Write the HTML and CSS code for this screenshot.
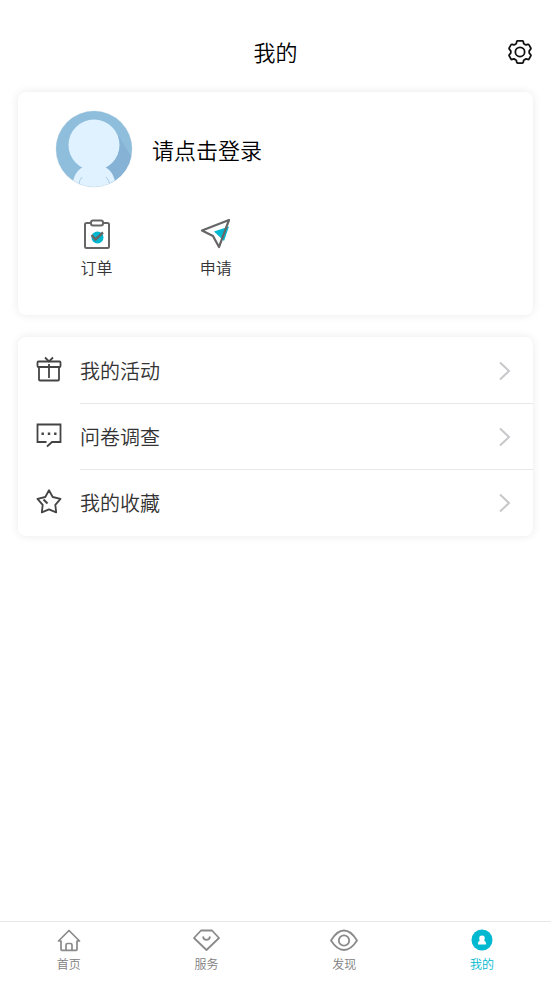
FILE: index.html
```html
<!DOCTYPE html>
<html lang="zh-CN">
<head>
<meta charset="utf-8">
<meta name="viewport" content="width=device-width, initial-scale=1">
<title>我的</title>
<link rel="stylesheet" href="styles.css">
</head>
<body>
<header class="header">
  <h1 class="title">我的</h1>
  <button class="settings" type="button" aria-label="设置">
    <svg width="26" height="28" viewBox="-0.5 -3 28 30" fill="none" stroke="#111" stroke-width="1.9" stroke-linejoin="round"><path d="M11 1h5q.8 0 1 .8l.5 2.300 2.500 1.400 2-.6q.8-.2 1.200.5l1.900 3.300q.4.700-.2 1.300L23.400 12v2l1.500 2q.6.600.2 1.300l-1.900 3.300q-.4.700-1.200.5l-2-.6-2.500 1.400-.5 2.300q-.2.800-1 .8h-5q-.8 0-1-.8l-.5-2.300L7 20.500l-2 .6q-.8.200-1.200-.5l-1.900-3.300q-.4-.7.2-1.300l1.500-2v-2l-1.500-2q-.6-.6-.2-1.300l1.900-3.300q.4-.7 1.200-.5l2 .6 2.500-1.400.5-2.300q.2-.8 1-.8z"/><circle cx="13.500" cy="13" r="5"/></svg>
  </button>
</header>
<main class="main">
  <section class="card profile">
    <a class="login" href="#login">
      <svg class="avatar" width="78" height="78" viewBox="0 0 78 78"><defs><clipPath id="disc"><circle cx="39" cy="39" r="38"/></clipPath></defs><circle cx="39" cy="39" r="38.500" fill="#e9edf0"/><g clip-path="url(#disc)"><path fill="#8fbedd" d="M0 0h78v78H0z"/><path fill="#85b2d5" d="M61 22 78 49v29H58L48 58z"/><path fill="#e0f2ff" d="M17 78c1-11 4-17 11-21h22c7 4 10 10 11 21z"/><circle cx="39" cy="35" r="25.500" fill="#e0f2ff"/><path fill="none" stroke="#9dc5df" stroke-width=".8" d="M27 67q-3 3-3 8M51 67q3 3 4 8"/></g></svg>
      <span>请点击登录</span>
    </a>
    <nav class="shortcuts">
      <a class="shortcut" href="#orders">
        <svg width="32" height="32" viewBox="0 0 32 32" fill="none" stroke="#666" stroke-width="2"><circle cx="16.500" cy="19.500" r="6" fill="#00b8d0" stroke="none"/><path d="M10 5H5.500Q4 5 4 6.500v22Q4 30 5.500 30h21q1.500 0 1.500-1.500v-22Q28 5 26.500 5H22"/><rect x="10" y="2.500" width="12" height="5" rx="2"/><path stroke-width="2.400" d="m10.500 17 4 4.500 7.500-7"/></svg>
        <span>订单</span>
      </a>
      <a class="shortcut" href="#apply">
        <svg width="32" height="32" viewBox="0 0 32 32" fill="none" stroke="#666" stroke-width="2.200" stroke-linejoin="round"><path fill="#00b8d0" stroke="none" d="m14 13.500 15-5-5 14.500z"/><path d="M29 2 2 12.500l11 5.500 6 11z"/></svg>
        <span>申请</span>
      </a>
    </nav>
  </section>
  <nav class="card menu">
    <a class="row" href="#activities">
      <svg class="row-icon" width="26" height="26" viewBox="0.5 0 26 26" fill="none" stroke="#444" stroke-width="1.800"><rect x="2" y="5.500" width="23" height="5.500" rx="1"/><path d="M3.500 11v12.500q0 1 1 1h18q1 0 1-1V11M13.500 8v14M9.500 1.500l4 4 4-4"/></svg>
      <span class="label">我的活动</span>
      <svg class="arrow" width="14" height="20" viewBox="0 0 14 20" fill="none" stroke="#c8c8cb" stroke-width="2"><path d="m2 1.500 9 8.500-9 8.500"/></svg>
    </a>
    <a class="row" href="#survey">
      <svg class="row-icon" width="26" height="26" viewBox="0.5 0 26 26" fill="none" stroke="#444" stroke-width="1.800"><path d="M11 20H2V2.500h23V20h-8.500l-5 4.500"/><path fill="#444" stroke="none" d="M6 10.500h2.400v2.400H6zm6.300 0h2.400v2.400h-2.400zm6.300 0H21v2.400h-2.400z"/></svg>
      <span class="label">问卷调查</span>
      <svg class="arrow" width="14" height="20" viewBox="0 0 14 20" fill="none" stroke="#c8c8cb" stroke-width="2"><path d="m2 1.500 9 8.500-9 8.500"/></svg>
    </a>
    <a class="row" href="#favorites">
      <svg class="row-icon" width="26" height="26" viewBox="0.5 0 26 26" fill="none" stroke="#444" stroke-width="1.800" stroke-linejoin="round"><path d="m13.500 2.300 3.700 6.700 7.800 1.800-5.200 6 .9 7.500-7.200-3-7.200 3 .9-7.500-5.200-6L9.800 9z"/><path stroke-width="2" d="m8 11.500 4 4"/></svg>
      <span class="label">我的收藏</span>
      <svg class="arrow" width="14" height="20" viewBox="0 0 14 20" fill="none" stroke="#c8c8cb" stroke-width="2"><path d="m2 1.500 9 8.500-9 8.500"/></svg>
    </a>
  </nav>
</main>
<nav class="tabs">
  <a class="tab" href="#home">
    <svg width="28" height="24" viewBox="0 0 28 24" fill="none" stroke="#8a8a8a" stroke-width="1.700" stroke-linejoin="round"><path d="M14 2.500 3.500 13H6v8.500q0 .8.800.8h14.400q.8 0 .8-.8V13h2.500zM11 22.300V17q0-1.500 1.500-1.500h3Q17 15.500 17 17v5.300"/></svg>
    <span>首页</span>
  </a>
  <a class="tab" href="#services">
    <svg width="28" height="24" viewBox="0 0 28 24" fill="none" stroke="#8a8a8a" stroke-width="1.800" stroke-linejoin="round"><path d="M8 2.500h11l7 7.500-12.500 12L1 10zM10 8.500q.5 3.300 3.500 3.300T17 8.500"/></svg>
    <span>服务</span>
  </a>
  <a class="tab" href="#discover">
    <svg width="28" height="24" viewBox="0 0 28 24" fill="none" stroke="#8a8a8a" stroke-width="1.800"><path d="M1 12.500Q7 2.500 14 2.500t13 10Q21 22 14 22T1 12.500z"/><circle cx="14" cy="12.500" r="5.200"/></svg>
    <span>发现</span>
  </a>
  <a class="tab active" href="#mine" aria-current="page">
    <svg width="28" height="24" viewBox="0 0 28 24"><circle cx="14" cy="12" r="10.500" fill="#00b8d0"/><path fill="#fff" d="M14 7.500c2 0 3 1.300 2.700 3 0 1-.5 1.700-.3 2.300.5.700 1.600 1.200 1.600 2.400v1.300h-8v-1.300c0-1.200 1.100-1.700 1.600-2.400.2-.6-.3-1.300-.3-2.300C11 8.800 12 7.500 14 7.500z"/></svg>
    <span>我的</span>
  </a>
</nav>
</body>
</html>
```
FILE: styles.css
```css
* {
  box-sizing: border-box;
}

body {
  margin: 0;
  min-height: 100vh;
  display: flex;
  flex-direction: column;
  background: #fff;
  color: #000;
  font-family: "Noto Sans CJK SC", sans-serif;
  font-weight: 350;
}

a {
  color: inherit;
  text-decoration: none;
}

svg {
  display: block;
  flex: none;
}

.header {
  display: grid;
  grid-template-columns: 1fr auto 1fr;
  align-items: center;
  padding: 35px 18px 25px;
}

.title {
  grid-column: 2;
  margin: 0;
  font-size: 22px;
  line-height: 32px;
  font-weight: 350;
}

.settings {
  justify-self: end;
  padding: 0;
  border: 0;
  background: none;
}

.main {
  flex: 1;
  display: flex;
  flex-direction: column;
  gap: 22px;
  padding: 0 18px 22px;
}

.card {
  border-radius: 8px;
  background: #fff;
  box-shadow: 0 0 10px rgba(0, 0, 0, 0.09);
}

.profile {
  padding: 18px 19px 36px;
}

.login {
  display: flex;
  align-items: center;
  gap: 19px;
  padding-left: 18px;
  font-size: 22px;
  line-height: 32px;
}

.shortcuts {
  display: flex;
  padding-top: 30px;
}

.shortcut {
  width: 25%;
  display: flex;
  flex-direction: column;
  align-items: center;
  gap: 5px;
  color: #333;
  font-size: 16px;
  line-height: 24px;
}

.menu {
  padding-top: 1px;
}

.row {
  display: flex;
  align-items: center;
  height: 66px;
  padding: 0 21px 0 18px;
  color: #333;
  font-size: 20px;
  line-height: 30px;
}

.row-icon {
  margin-bottom: 5px;
}

.label {
  flex: 1;
  padding-left: 18px;
}

.row:not(:last-child) {
  background: linear-gradient(#e8e8e8, #e8e8e8) 62px 100% / 100% 1px no-repeat;
}

.tabs {
  display: flex;
  height: 60px;
  padding-top: 6px;
  border-top: 1px solid #e8e8e8;
}

.tab {
  flex: 1;
  display: flex;
  flex-direction: column;
  align-items: center;
  gap: 3px;
  color: #808080;
  font-size: 12px;
  line-height: 18px;
}

.active {
  color: #00b8d0;
}
```
